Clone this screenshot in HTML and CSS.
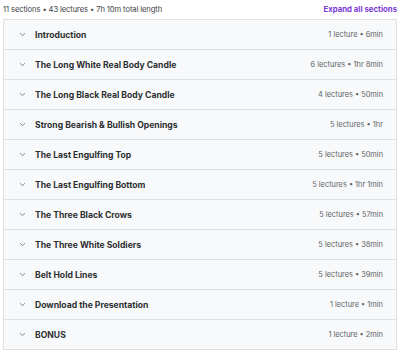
FILE: index.html
```html
<!DOCTYPE html>
<html lang="en">
<head>
  <meta charset="UTF-8" />
  <title>Course content</title>
  <link rel="stylesheet" href="styles.css">
</head>
<body>
  <div class="curriculum">
    <div class="summary">
      <span class="stats">11 sections • 43 lectures • 7h 10m total length</span>
      <button class="expand-all">Expand all sections</button>
    </div>

    <div class="sections">
      <div class="section">
        <svg class="chevron" viewBox="0 0 10 6"><path d="M1.5 1.2 L5 4.6 L8.5 1.2" /></svg>
        <span class="title">Introduction</span>
        <span class="meta">1 lecture • 6min</span>
      </div>
      <div class="section">
        <svg class="chevron" viewBox="0 0 10 6"><path d="M1.5 1.2 L5 4.6 L8.5 1.2" /></svg>
        <span class="title">The Long White Real Body Candle</span>
        <span class="meta">6 lectures • 1hr 8min</span>
      </div>
      <div class="section">
        <svg class="chevron" viewBox="0 0 10 6"><path d="M1.5 1.2 L5 4.6 L8.5 1.2" /></svg>
        <span class="title">The Long Black Real Body Candle</span>
        <span class="meta">4 lectures • 50min</span>
      </div>
      <div class="section">
        <svg class="chevron" viewBox="0 0 10 6"><path d="M1.5 1.2 L5 4.6 L8.5 1.2" /></svg>
        <span class="title">Strong Bearish &amp; Bullish Openings</span>
        <span class="meta">5 lectures • 1hr</span>
      </div>
      <div class="section">
        <svg class="chevron" viewBox="0 0 10 6"><path d="M1.5 1.2 L5 4.6 L8.5 1.2" /></svg>
        <span class="title">The Last Engulfing Top</span>
        <span class="meta">5 lectures • 50min</span>
      </div>
      <div class="section">
        <svg class="chevron" viewBox="0 0 10 6"><path d="M1.5 1.2 L5 4.6 L8.5 1.2" /></svg>
        <span class="title">The Last Engulfing Bottom</span>
        <span class="meta">5 lectures • 1hr 1min</span>
      </div>
      <div class="section">
        <svg class="chevron" viewBox="0 0 10 6"><path d="M1.5 1.2 L5 4.6 L8.5 1.2" /></svg>
        <span class="title">The Three Black Crows</span>
        <span class="meta">5 lectures • 57min</span>
      </div>
      <div class="section">
        <svg class="chevron" viewBox="0 0 10 6"><path d="M1.5 1.2 L5 4.6 L8.5 1.2" /></svg>
        <span class="title">The Three White Soldiers</span>
        <span class="meta">5 lectures • 38min</span>
      </div>
      <div class="section">
        <svg class="chevron" viewBox="0 0 10 6"><path d="M1.5 1.2 L5 4.6 L8.5 1.2" /></svg>
        <span class="title">Belt Hold Lines</span>
        <span class="meta">5 lectures • 39min</span>
      </div>
      <div class="section">
        <svg class="chevron" viewBox="0 0 10 6"><path d="M1.5 1.2 L5 4.6 L8.5 1.2" /></svg>
        <span class="title">Download the Presentation</span>
        <span class="meta">1 lecture • 1min</span>
      </div>
      <div class="section">
        <svg class="chevron" viewBox="0 0 10 6"><path d="M1.5 1.2 L5 4.6 L8.5 1.2" /></svg>
        <span class="title">BONUS</span>
        <span class="meta">1 lecture • 2min</span>
      </div>
    </div>
  </div>
</body>
</html>
```

FILE: styles.css
```css
* {
  box-sizing: border-box;
}

body {
  margin: 0;
  padding: 0 3px;
  background: #fff;
  font-family: Inter, 'Noto Sans', sans-serif;
  color: #2d2f31;
}

.summary {
  display: flex;
  justify-content: space-between;
  align-items: center;
  height: 19px;
  padding-bottom: 1px;
}

.stats {
  font-size: 7.6px;
  color: #3e4143;
  letter-spacing: -0.1px;
}

.expand-all {
  background: none;
  border: none;
  padding: 0;
  font-family: inherit;
  font-size: 7.8px;
  font-weight: 700;
  color: #7c3ad6;
  cursor: pointer;
}

.sections {
  border: 1px solid #dde1e4;
  border-bottom: none;
}

.section {
  display: flex;
  align-items: center;
  height: 30px;
  padding: 0 13px 0 15px;
  background: #f7f9fa;
  border-bottom: 1px solid #dde1e4;
}

.chevron {
  width: 7px;
  height: 5px;
  margin-right: 9px;
  fill: none;
  stroke: #6a6f73;
  stroke-width: 1.2;
}

.title {
  flex: 1;
  font-size: 8.6px;
  font-weight: 700;
  color: #2d2f31;
}

.meta {
  font-size: 7.4px;
  color: #5f6468;
}
```
